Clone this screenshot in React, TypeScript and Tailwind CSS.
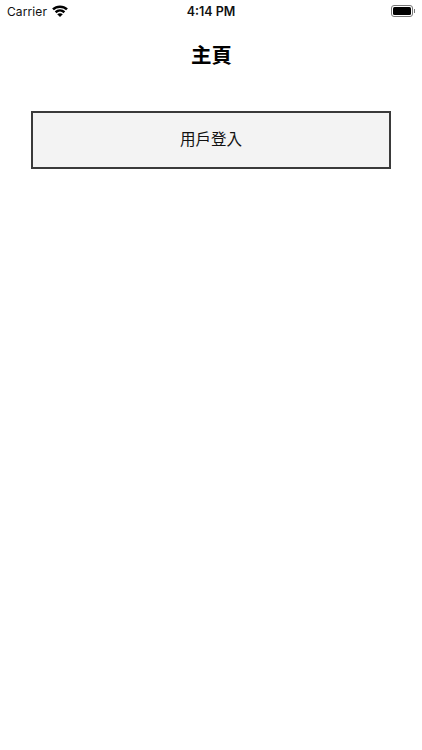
import React from 'react';

const WifiIcon = () => (
  <svg width="16" height="12" viewBox="0 0 16 12" fill="none" className="ml-[5px] -mt-[1px]">
    <path d="M1 4.4C4.9 0.7 11.1 0.7 15 4.4" stroke="#000" strokeWidth="2.5" />
    <path d="M3.6 7.2C6.1 5 9.9 5 12.4 7.2" stroke="#000" strokeWidth="2.5" />
    <path d="M8 12L5.2 9.2C6.8 7.9 9.2 7.9 10.8 9.2Z" fill="#000" />
  </svg>
);

const BatteryIcon = () => (
  <div className="flex items-center">
    <div className="w-[22px] h-[12px] rounded-[3px] border border-[#777] p-[1px]">
      <div className="w-full h-full rounded-[1.5px] bg-black" />
    </div>
    <div className="ml-[1px] w-[1px] h-[4px] bg-[#777]" />
  </div>
);

const App = () => {
  return (
    <div className="min-h-screen bg-white text-black font-['Liberation_Sans','Noto_Sans_CJK_TC',sans-serif]">
      {/* Status bar */}
      <div className="relative h-[22px] flex items-center justify-between pl-[7px] pr-[7px]">
        <div className="flex items-center">
          <span className="text-[12px] font-['Inter',sans-serif] text-[#111] translate-y-[1px] tracking-[0.1px]">Carrier</span>
          <WifiIcon />
        </div>
        <span className="absolute left-0 right-0 text-center text-[12.5px] font-semibold font-['Inter',sans-serif] text-[#111] translate-y-[1px]">
          4:14 PM
        </span>
        <BatteryIcon />
      </div>

      {/* Title */}
      <h1 className="mt-[20px] pl-[1px] text-center text-[20.5px] leading-[28px] font-bold">主頁</h1>

      {/* Login button */}
      <div className="mt-[41px] pl-[31px]">
        <button className="w-[360px] h-[58px] bg-[#f3f3f3] border-2 border-[#3a3a3a] text-[15.5px] text-[#111] flex items-center justify-center">
          用戶登入
        </button>
      </div>
    </div>
  );
};

export default App;
